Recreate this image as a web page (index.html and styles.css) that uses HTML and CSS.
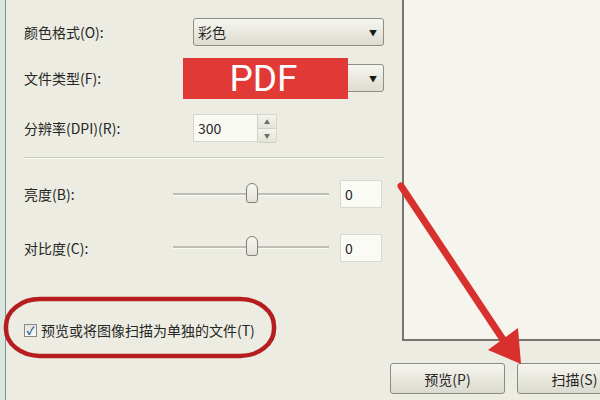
FILE: index.html
```html
<!DOCTYPE html>
<html>
<head>
<meta charset="utf-8">
<title>扫描</title>
<link rel="stylesheet" href="styles.css">
</head>
<body>
<div class="window">
    <div class="main">
        <div class="settings">
            <div class="row row-color">
                <span class="label">颜色格式(O):</span>
                <div class="select"><span>彩色</span><span class="caret">▼</span></div>
            </div>
            <div class="row row-type">
                <span class="label">文件类型(F):</span>
                <div class="select"><span>PDF</span><span class="caret">▼</span></div>
            </div>
            <div class="row row-dpi">
                <span class="label">分辨率(DPI)(R):</span>
                <div class="spin">
                    <span class="spin-value">300</span>
                    <div class="spin-buttons">
                        <span class="spin-btn">▲</span>
                        <span class="spin-btn">▼</span>
                    </div>
                </div>
            </div>
            <div class="separator"></div>
            <div class="row row-slider row-bright">
                <span class="label">亮度(B):</span>
                <div class="slider"><span class="thumb"></span></div>
                <span class="value-box">0</span>
            </div>
            <div class="row row-slider row-contrast">
                <span class="label">对比度(C):</span>
                <div class="slider"><span class="thumb"></span></div>
                <span class="value-box">0</span>
            </div>
            <label class="check-row">
                <span class="checkbox">✓</span>
                <span>预览或将图像扫描为单独的文件(T)</span>
            </label>
        </div>
        <div class="preview"></div>
    </div>
    <div class="footer">
        <button class="btn">预览(P)</button>
        <button class="btn">扫描(S)</button>
    </div>
</div>

<div class="tag-pdf">PDF</div>

<svg class="marks" width="600" height="400" viewBox="0 0 600 400">
    <rect x="6" y="299" width="268" height="57" rx="34" ry="27" fill="none" stroke="#b61d1f" stroke-width="4.5"/>
    <line x1="401" y1="186" x2="504" y2="341" stroke="#d8302c" stroke-width="7" stroke-linecap="round"/>
    <polygon points="488,350 518,328 521,364" fill="#d8302c"/>
</svg>
</body>
</html>
```

FILE: styles.css
```css
html, body {
    margin: 0;
    height: 100%;
    overflow: hidden;
}

body {
    background-color: #dbe6e0;
    font-family: "Noto Sans CJK SC", sans-serif;
    font-size: 14px;
    color: #262624;
    position: relative;
}

.window {
    margin-left: 5px;
    height: 400px;
    border-left: 1px solid #7f958b;
    background-color: #ecece2;
    overflow: hidden;
}

.main {
    display: flex;
    height: 341px;
}

.settings {
    width: 378px;
    padding-left: 18px;
    padding-top: 18px;
}

.row {
    display: flex;
    align-items: center;
    height: 28px;
}

.row-type {
    margin-top: 18px;
}

.row-dpi {
    margin-top: 22px;
}

.row-bright {
    margin-top: 21px;
}

.row-contrast {
    margin-top: 25px;
    height: 29px;
}

.label {
    width: 169px;
    flex-shrink: 0;
}

.row-slider .label {
    width: 149px;
}

.select {
    width: 191px;
    height: 28px;
    box-sizing: border-box;
    border: 1px solid #8e8e86;
    border-radius: 3px;
    background: linear-gradient(#f7f7f1, #e9e9e0 50%, #dcdcd2);
    display: flex;
    align-items: center;
    justify-content: space-between;
    padding: 0 6px 0 4px;
}

.caret {
    font-size: 8px;
    color: #1a1a1a;
}

.spin {
    width: 84px;
    height: 28px;
    display: flex;
    box-sizing: border-box;
    border: 1px solid #d6d6cc;
    background-color: #fafaf4;
}

.spin-value {
    flex: 1;
    padding-left: 4px;
    line-height: 26px;
}

.spin-buttons {
    width: 18px;
    display: flex;
    flex-direction: column;
    border-left: 1px solid #d0d0c6;
}

.spin-btn {
    flex: 1;
    font-size: 6px;
    color: #6c6c66;
    text-align: center;
    line-height: 13px;
    background: linear-gradient(#f4f4ee, #e4e4da);
    border-bottom: 1px solid #d0d0c6;
}

.separator {
    width: 360px;
    margin-top: 15px;
    border-top: 1px solid #c9c9c0;
    border-bottom: 1px solid #fafaf4;
}

.slider {
    width: 156px;
    height: 2px;
    background-color: #bdbdb5;
    border-bottom: 1px solid #fbfbf6;
    position: relative;
    margin-right: 11px;
}

.thumb {
    position: absolute;
    left: 73px;
    top: -10px;
    width: 12px;
    height: 20px;
    box-sizing: border-box;
    border: 1px solid #7f7f78;
    border-radius: 6px 6px 3px 3px;
    background: linear-gradient(#f8f8f2, #e2e2d8);
}

.value-box {
    width: 42px;
    height: 28px;
    box-sizing: border-box;
    border: 1px solid #dadad1;
    background-color: #fbfbf6;
    padding-left: 4px;
    line-height: 26px;
}

.check-row {
    display: flex;
    align-items: center;
    gap: 4px;
    margin-top: 58px;
}

.checkbox {
    width: 13px;
    height: 13px;
    box-sizing: border-box;
    border: 1px solid #8a8a84;
    background: linear-gradient(#e6e6e0, #fafaf6);
    font-size: 11px;
    line-height: 11px;
    text-align: center;
    color: #2f5c96;
    font-weight: bold;
}

.preview {
    flex: 1;
    background-color: #f5f5ed;
    border-left: 2px solid #76766e;
    border-bottom: 2px solid #76766e;
}

.footer {
    display: flex;
    gap: 12px;
    padding-left: 384px;
    padding-top: 22px;
}

.btn {
    width: 115px;
    height: 31px;
    flex-shrink: 0;
    font-family: "Noto Sans CJK SC", sans-serif;
    font-size: 14px;
    color: #262624;
    border: 1px solid #8c8c86;
    border-radius: 3px;
    background: linear-gradient(#f6f6f0, #e8e8de 50%, #dadad0);
}

.tag-pdf {
    position: absolute;
    left: 183px;
    top: 58px;
    width: 165px;
    height: 41px;
    background-color: #e13a36;
    color: #fff;
    font-family: Roboto, sans-serif;
    font-size: 37px;
    line-height: 41px;
    text-align: center;
    padding-right: 4px;
    box-sizing: border-box;
}

.marks {
    position: absolute;
    left: 0;
    top: 0;
    pointer-events: none;
}
```
